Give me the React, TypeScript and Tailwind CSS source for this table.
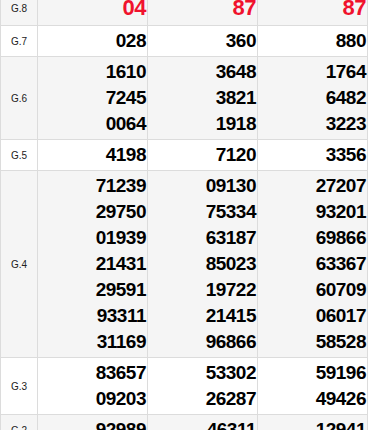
const rows: { label: string; cols: string[][]; red?: boolean }[] = [
  { label: 'G.8', cols: [['04'], ['87'], ['87']], red: true },
  { label: 'G.7', cols: [['028'], ['360'], ['880']] },
  { label: 'G.6', cols: [['1610', '7245', '0064'], ['3648', '3821', '1918'], ['1764', '6482', '3223']] },
  { label: 'G.5', cols: [['4198'], ['7120'], ['3356']] },
  {
    label: 'G.4',
    cols: [
      ['71239', '29750', '01939', '21431', '29591', '93311', '31169'],
      ['09130', '75334', '63187', '85023', '19722', '21415', '96866'],
      ['27207', '93201', '69866', '63367', '60709', '06017', '58528'],
    ],
  },
  { label: 'G.3', cols: [['83657', '09203'], ['53302', '26287'], ['59196', '49426']] },
  { label: 'G.2', cols: [['92989'], ['46311'], ['12941']] },
  { label: 'G.1', cols: [['40215'], ['77302'], ['18540']] },
];

export default function App() {
  return (
    <div
      className="h-[430px] w-[370px] overflow-hidden bg-white"
      style={{ fontFamily: '"Liberation Sans", Arial, sans-serif' }}
    >
      <div className="mt-[-9px] w-[368px] border-l border-[#dcdcdc]">
        {rows.map((row, i) => (
          <div
            key={row.label}
            className={`flex border-b border-[#dcdcdc] ${i % 2 === 0 ? 'bg-[#f5f5f5]' : 'bg-white'}`}
          >
            <div className="flex w-[37px] shrink-0 items-center justify-center border-r border-[#dcdcdc] text-[10px] text-[#222]">
              {row.label}
            </div>
            {row.cols.map((nums, j) => (
              <div
                key={j}
                className="w-[110px] shrink-0 border-r border-[#dcdcdc] py-[2px] pr-[1px] text-right font-bold tracking-[-0.5px]"
              >
                {nums.map((n, k) => (
                  <div
                    key={k}
                    className={row.red ? 'text-[22px] leading-[30px] text-[#f0122d]' : 'text-[19px] leading-[26px] text-black'}
                  >
                    {n}
                  </div>
                ))}
              </div>
            ))}
          </div>
        ))}
      </div>
    </div>
  );
}
